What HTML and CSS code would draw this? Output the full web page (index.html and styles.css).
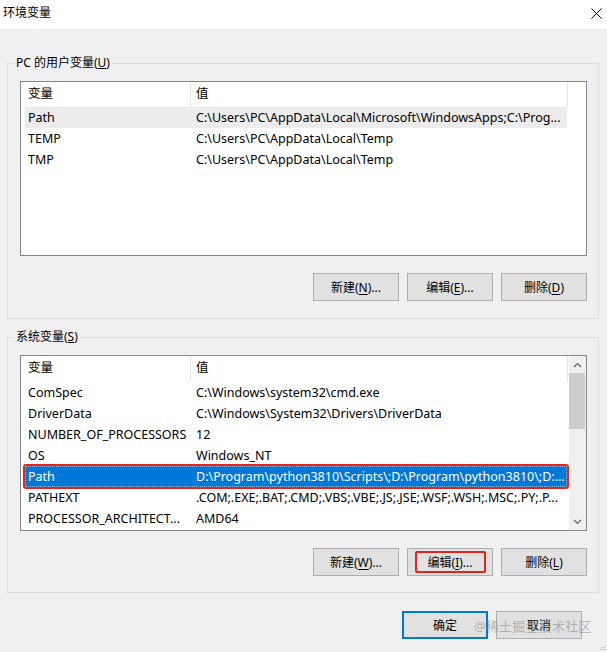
FILE: index.html
```html
<!DOCTYPE html>
<html lang="zh-CN">
<head>
<meta charset="utf-8">
<title>环境变量</title>
<link rel="stylesheet" href="styles.css">
</head>
<body>
<div class="window">
  <header class="titlebar">
    <span class="title">环境变量</span>
    <svg class="close" width="11" height="11" viewBox="0 0 11 11"><path d="M0.5 0.5 L10.5 10.5 M10.5 0.5 L0.5 10.5" stroke="#000" stroke-width="1" fill="none"/></svg>
  </header>

  <fieldset class="group group-user">
    <legend>PC 的用户变量(<u>U</u>)</legend>
    <div class="listview lv-user">
      <div class="lv-main">
        <div class="lv-header"><div class="h1">变量</div><div class="h2">值</div></div>
        <div class="row hover"><span class="c1">Path</span><span class="c2">C:\Users\PC\AppData\Local\Microsoft\WindowsApps;C:\Prog...</span></div>
        <div class="row"><span class="c1">TEMP</span><span class="c2">C:\Users\PC\AppData\Local\Temp</span></div>
        <div class="row"><span class="c1">TMP</span><span class="c2">C:\Users\PC\AppData\Local\Temp</span></div>
      </div>
    </div>
    <div class="btnrow">
      <button class="btn">新建(<u>N</u>)...</button>
      <button class="btn">编辑(<u>E</u>)...</button>
      <button class="btn">删除(<u>D</u>)</button>
    </div>
  </fieldset>

  <fieldset class="group group-sys">
    <legend>系统变量(<u>S</u>)</legend>
    <div class="listview lv-sys">
      <div class="lv-main">
        <div class="lv-header"><div class="h1">变量</div><div class="h2">值</div></div>
        <div class="row"><span class="c1">ComSpec</span><span class="c2">C:\Windows\system32\cmd.exe</span></div>
        <div class="row"><span class="c1">DriverData</span><span class="c2">C:\Windows\System32\Drivers\DriverData</span></div>
        <div class="row"><span class="c1">NUMBER_OF_PROCESSORS</span><span class="c2">12</span></div>
        <div class="row"><span class="c1">OS</span><span class="c2">Windows_NT</span></div>
        <div class="row selected"><span class="c1">Path</span><span class="c2">D:\Program\python3810\Scripts\;D:\Program\python3810\;D:...</span></div>
        <div class="row"><span class="c1">PATHEXT</span><span class="c2">.COM;.EXE;.BAT;.CMD;.VBS;.VBE;.JS;.JSE;.WSF;.WSH;.MSC;.PY;.P...</span></div>
        <div class="row"><span class="c1">PROCESSOR_ARCHITECT...</span><span class="c2">AMD64</span></div>
      </div>
      <div class="scrollbar">
        <div class="sb-btn"><svg width="9" height="6" viewBox="0 0 9 6"><path d="M1 5 L4.5 1.5 L8 5" stroke="#606060" stroke-width="1.2" fill="none"/></svg></div>
        <div class="sb-track"><div class="sb-thumb"></div></div>
        <div class="sb-btn"><svg width="9" height="6" viewBox="0 0 9 6"><path d="M1 1 L4.5 4.5 L8 1" stroke="#606060" stroke-width="1.2" fill="none"/></svg></div>
      </div>
    </div>
    <div class="btnrow">
      <button class="btn">新建(<u>W</u>)...</button>
      <button class="btn"><span class="mark">编辑(<u>I</u>)...</span></button>
      <button class="btn">删除(<u>L</u>)</button>
    </div>
  </fieldset>

  <footer class="footer">
    <button class="btn primary">确定</button>
    <button class="btn">取消</button>
  </footer>

  <div class="watermark">@稀土掘金技术社区</div>
  <svg class="grip" width="6" height="6" viewBox="0 0 6 6"><rect x="4" y="0" width="1" height="1" fill="#b8b8b8"/><rect x="2" y="2" width="1" height="1" fill="#b8b8b8"/><rect x="4" y="2" width="1" height="1" fill="#b8b8b8"/><rect x="0" y="4" width="1" height="1" fill="#b8b8b8"/><rect x="2" y="4" width="1" height="1" fill="#b8b8b8"/><rect x="4" y="4" width="1" height="1" fill="#b8b8b8"/></svg>
</div>
</body>
</html>
```

FILE: styles.css
```css
* { box-sizing: border-box; }
html, body {
  margin: 0;
  padding: 0;
  background: #f0f0f0;
}
body {
  font-family: "Noto Sans", "Noto Sans CJK SC", sans-serif;
  font-size: 12px;
  color: #000;
}
.window {
  position: relative;
  width: 607px;
  height: 652px;
  overflow: hidden;
}
.titlebar {
  height: 29px;
  background: #fff;
  display: flex;
  align-items: center;
  justify-content: space-between;
  padding: 0 5px 3px 3px;
}
.title { font-size: 12px; line-height: 16px; }
.close { display: block; }

.group {
  margin: 0 8px 0 7px;
  border: 1px solid #dcdcdc;
  min-inline-size: 0;
}
.group legend {
  padding: 0 2px;
  margin-left: -6px;
  line-height: 16px;
  font-size: 12px;
}
.group-user {
  margin-top: 26px;
  padding: 10px 11px 17px 12px;
}
.group-sys {
  margin-top: 10px;
  padding: 10px 11px 16px 12px;
}

.listview {
  background: #fff;
  border: 1px solid #828790;
  display: flex;
  font-size: 12.5px;
}
.lv-user { height: 175px; }
.lv-sys { height: 176px; }
.lv-main {
  flex: 1;
  display: flex;
  flex-direction: column;
  min-width: 0;
}
.lv-header {
  display: flex;
  height: 25px;
  flex: none;
}
.lv-sys .lv-header { height: 26px; }
.h1, .h2 {
  line-height: 24px;
  border-right: 1px solid #e5e5e5;
}
.h1 { width: 170px; padding-left: 7px; }
.h2 { width: 377px; padding-left: 5px; }

.row {
  display: flex;
  height: 21px;
  line-height: 20px;
  padding-top: 1px;
  margin-left: 4px;
  width: 542px;
  flex: none;
  white-space: nowrap;
}
.c1 { width: 165px; padding-left: 3px; overflow: hidden; }
.c2 { flex: 1; padding-left: 6px; overflow: hidden; }
.row.hover { background: #ececec; }
.row.selected {
  background: #0078d7;
  color: #fff;
  border: 1px dotted #8cc2ee;
  padding-top: 0;
  line-height: 19px;
  outline: 2px solid #e3231c;
  outline-offset: 0;
  border-radius: 1px;
}
.row.selected .c1 { padding-left: 2px; width: 164px; }

.scrollbar {
  width: 17px;
  flex: none;
  background: #f0f0f0;
  display: flex;
  flex-direction: column;
}
.sb-btn {
  height: 17px;
  display: flex;
  align-items: center;
  justify-content: center;
}
.sb-btn svg { display: block; }
.sb-track { flex: 1; padding: 0 1px 0 0; }
.sb-thumb {
  height: 56px;
  background: #cdcdcd;
}

.btnrow {
  display: flex;
  justify-content: flex-end;
  gap: 8px;
  margin-top: 17px;
}
.btn {
  width: 86px;
  height: 28px;
  background: #e1e1e1;
  border: 1px solid #adadad;
  font-family: inherit;
  font-size: 12px;
  color: #000;
  padding: 0;
  margin: 0;
  display: flex;
  align-items: center;
  justify-content: center;
}
.btn u { text-underline-offset: 2px; }
.mark {
  display: flex;
  align-items: center;
  justify-content: center;
  width: 71px;
  height: 22px;
  border: 2px solid #e3231c;
  border-radius: 2px;
}

.footer {
  display: flex;
  justify-content: flex-end;
  gap: 8px;
  margin-top: 18px;
  padding-right: 25px;
}
.btn.primary {
  border: 2px solid #0078d7;
}

.watermark {
  position: absolute;
  left: 474px;
  top: 617px;
  font-size: 13px;
  line-height: 18px;
  color: rgba(140, 140, 140, 0.6);
  letter-spacing: 0.2px;
  pointer-events: none;
}
.grip {
  position: absolute;
  right: 1px;
  bottom: 1px;
}
```
